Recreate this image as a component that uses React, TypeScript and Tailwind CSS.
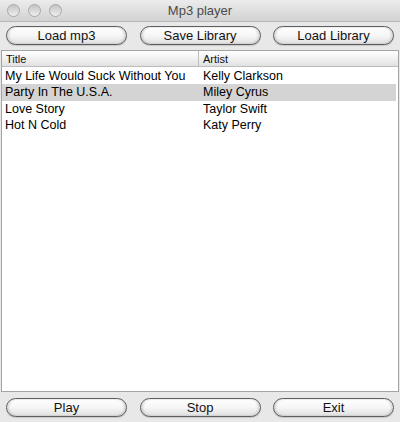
import React from "react";

const songs = [
  { title: "My Life Would Suck Without You", artist: "Kelly Clarkson" },
  { title: "Party In The U.S.A.", artist: "Miley Cyrus" },
  { title: "Love Story", artist: "Taylor Swift" },
  { title: "Hot N Cold", artist: "Katy Perry" }
];

function PillButton({ label }: { label: string }) {
  return (
    <button
      type="button"
      className="flex h-[19px] w-[121px] items-center justify-center rounded-full border border-[#5e5e5e] bg-gradient-to-b from-white via-[#f6f6f6] to-[#e0e0e0] text-[13px] leading-none text-[#111] shadow-[inset_2px_0_2px_rgba(0,0,0,0.12),inset_-2px_0_2px_rgba(0,0,0,0.12),0_1px_1px_rgba(0,0,0,0.15)]"
    >
      {label}
    </button>
  );
}

export default function App() {
  return (
    <div
      className="flex h-[422px] w-[400px] flex-col bg-[#e8e8e8]"
      style={{ fontFamily: '"Liberation Sans", Arial, sans-serif' }}
    >
      {/* title bar */}
      <div className="relative flex h-[22px] items-center justify-center border-b border-[#b8b8b8] bg-gradient-to-b from-[#ececec] to-[#d2d2d2]">
        <div className="absolute left-[7px] top-[4px] flex gap-[8px]">
          {[0, 1, 2].map((i) => (
            <span
              key={i}
              className="h-[13px] w-[13px] rounded-full border border-[#a8a8a8] bg-gradient-to-b from-[#c4c4c4] to-[#eeeeee]"
            />
          ))}
        </div>
        <span className="text-[13px] text-[#4a4a4a]">Mp3 player</span>
      </div>

      {/* toolbar */}
      <div className="flex justify-between px-[6px] pt-[4px] pb-[5px]">
        <PillButton label="Load mp3" />
        <PillButton label="Save Library" />
        <PillButton label="Load Library" />
      </div>

      {/* table */}
      <div className="mx-[1px] flex flex-1 flex-col border border-[#a5a5a5] bg-white">
        <div className="flex h-[16px] items-center border-b border-[#bdbdbd] bg-gradient-to-b from-white via-[#f1f1f1] to-[#e1e1e1] text-[11px] text-[#111]">
          <div className="h-full w-[197px] border-r border-[#bdbdbd] pl-[4px] leading-[16px]">Title</div>
          <div className="pl-[4px] leading-[16px]">Artist</div>
        </div>
        <div className="pt-[1px]">
          {songs.map((s, i) => (
            <div
              key={s.title}
              className={
                "flex h-[16.4px] items-center text-[12.5px] leading-none text-black " +
                (i === 1 ? "mr-[2px] bg-[#d4d4d4]" : "")
              }
            >
              <div className="w-[198px] pl-[3px]">{s.title}</div>
              <div className="pl-[3px]">{s.artist}</div>
            </div>
          ))}
        </div>
      </div>

      {/* footer */}
      <div className="flex justify-between px-[6px] pt-[6px] pb-[5px]">
        <PillButton label="Play" />
        <PillButton label="Stop" />
        <PillButton label="Exit" />
      </div>
    </div>
  );
}
